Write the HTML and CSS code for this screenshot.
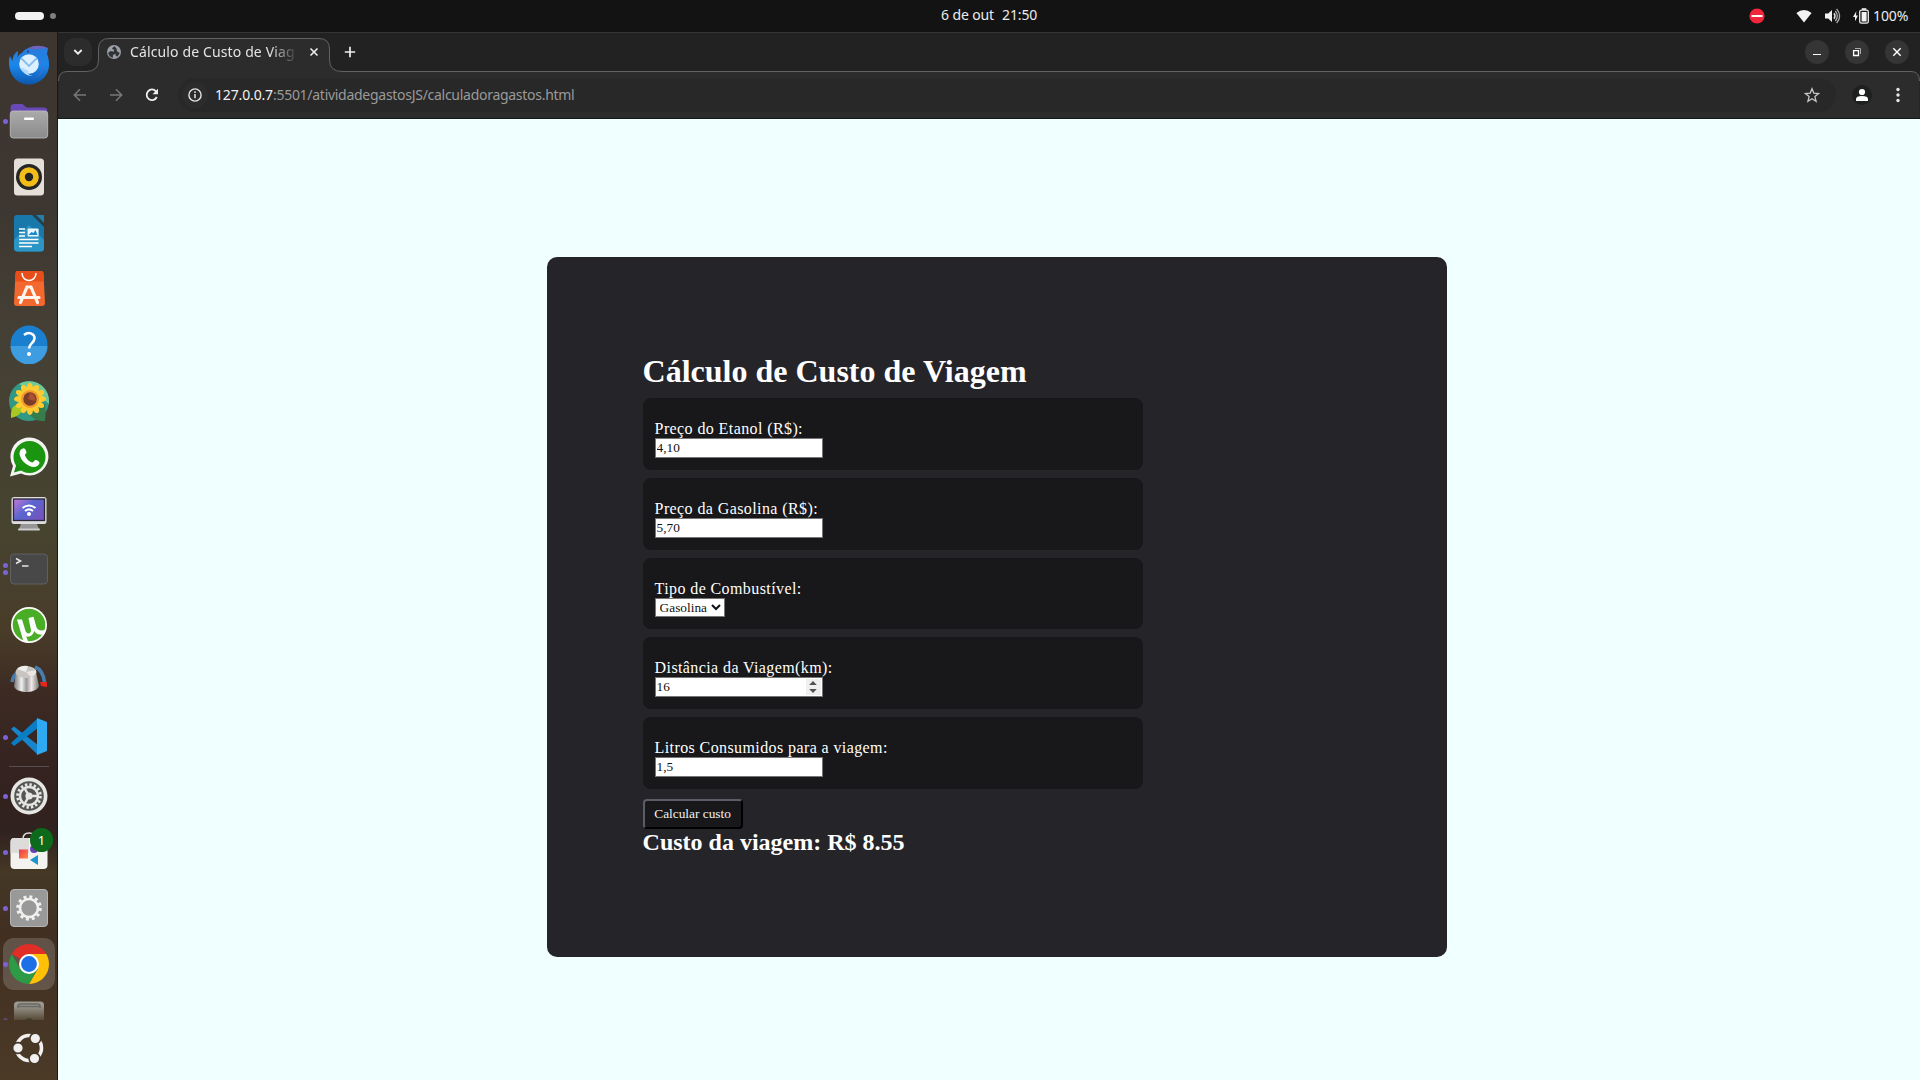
FILE: index.html
```html
<!DOCTYPE html>
<html lang="pt-BR">
<head>
<meta charset="utf-8">
<title>Cálculo de Custo de Viagem</title>
<link rel="stylesheet" href="styles.css">
</head>
<body>
<header class="topbar">
  <div class="workspaces"><span class="pill"></span><span class="dot"></span></div>
  <div class="clock"><span class="date">6 de out</span><span class="time">21:50</span></div>
  <div class="status">
    <svg class="dnd" width="16" height="16" viewBox="0 0 16 16"><circle cx="8" cy="8" r="7.6" fill="#f0263c"/><rect x="2.500" y="7" width="11" height="2" fill="#fff"/></svg>
    <svg class="wifi" width="16" height="16" viewBox="0 0 16 16"><path d="M.4 5Q8-1 15.600 5L8 14.600Z" fill="#f2f2f2"/></svg>
    <svg class="vol" width="16" height="16" viewBox="0 0 16 16"><path d="M0 5.500h3.200L7 2v12L3.200 10.500H0Z" fill="#f2f2f2"/><path d="M9 5.300q2 2.700 0 5.400" fill="none" stroke="#ddd" stroke-width="1.500"/><path d="M10.300 3q4 5 0 10M11.600.8q6 7.200 0 14.400" fill="none" stroke="#aaa" stroke-width="1.300"/></svg>
    <svg class="bat" width="16" height="16" viewBox="0 0 16 16"><path d="M3.300 3.200 0 9h2v4.300L5 7.600H3Z" fill="#eee"/><rect x="6.700" y="2.200" width="8.600" height="13" rx="1.800" fill="none" stroke="#eee" stroke-width="1.300"/><rect x="8.600" y="4" width="5" height="9.500" fill="#f2f2f2"/><rect x="8.800" y=".2" width="4.500" height="1.700" fill="#eee"/></svg>
    <span class="percent">100%</span>
  </div>
</header>
<div class="desktop">
  <nav class="dock">
    <div class="slot"><svg width="40" height="40" viewBox="0 0 40 40"><defs><linearGradient id="tb" x1="0" y1="0" x2="0" y2="1"><stop offset="0" stop-color="#2b79d8"/><stop offset=".5" stop-color="#1b87ea"/><stop offset="1" stop-color="#0d57ad"/></linearGradient></defs><path d="M1 11C-.5 15-.3 20 1 25 3.500 34 11 39.500 20 39.500S40 32 40 20c0-5-.7-8-2-11l1-6C32-.5 18 0 13 8c-2.500 1-3.500 2-4.500 5L9 6C6 8 4 10 3.500 16Z" fill="url(#tb)"/><path d="M19 4C24-.8 33 .2 38.500 3c-6 0-13 2-17.500 1" fill="#7163ba"/><path d="M30 14c7 8 4 19-9 20 8-1 12-6 12-12" fill="#5869d8"/><circle cx="20" cy="19" r="9.800" fill="#dcf0ff"/><path d="m12 13 8 8 8-8" fill="none" stroke="#8bbdeb" stroke-width="1.800"/><path d="M11 22c3 6 6 9 13 9-5-1-6-3-4-5" fill="#b2d9ff"/><circle cx="19" cy="6.500" r="1" fill="#173d7e"/></svg></div>
    <div class="slot run1"><svg width="40" height="40" viewBox="0 0 40 40"><defs><linearGradient id="fg" x1="0" y1="0" x2="0" y2="1"><stop offset="0" stop-color="#aaa"/><stop offset="1" stop-color="#8b8b8b"/></linearGradient></defs><path d="M1.500 7q0-4 4-4h8l4 3.500H35q3.500 0 3.500 3.500v6h-37Z" fill="#694ab4"/><rect x="1.300" y="10" width="37.400" height="27" rx="3" fill="url(#fg)" stroke="#c0c0c0" stroke-width=".8"/><rect x="15" y="16.500" width="10" height="2.500" rx="1" fill="#fff"/></svg></div>
    <div class="slot"><svg width="40" height="40" viewBox="0 0 40 40"><rect x="5" y="1.500" width="30" height="37" rx="3.500" fill="#e4e0d8"/><circle cx="20" cy="20" r="13" fill="#252525"/><circle cx="20" cy="20" r="9.800" fill="#f2bd18"/><circle cx="20" cy="20" r="4.200" fill="#222"/></svg></div>
    <div class="slot"><svg width="40" height="40" viewBox="0 0 40 40"><path d="M8 2h19l8 8v25q0 3.500-3.500 3.500h-23Q5 38.500 5 35V5q0-3 3-3Z" fill="#1978aa"/><path d="M20 12 35 27v8q0 3.500-3.500 3.500h-23Q5 38.500 5 35V27Z" fill="#2b95c5"/><path d="M27 2h8v8Z" fill="#247ea9"/><path d="m23 2 12 12V10l-8-8Z" fill="#273e4b"/><path d="M10 16h6M10 19.500h6M10 23h6M10 26.500h19.500M10 30h19.500M10 33.500h13" stroke="#fff" stroke-width="1.500"/><rect x="18.600" y="15.500" width="11" height="8" rx="1" fill="#eaf7ff"/><path d="m19.500 22 3-3 2 1 2-3 2 5Z" fill="#168acc"/></svg></div>
    <div class="slot"><svg width="40" height="40" viewBox="0 0 40 40"><path d="M8 2h24q2.500 0 2.500 2.500L36 34q0 3-3 3H8q-3 0-3-3L6.500 4.500Q6.500 2 8 2Z" fill="#f3682e"/><path d="M8 2h24q2.500 0 2.500 2.500l.5 8H6.200l.4-8Q6.600 2 8 2Z" fill="#e84e19"/><path d="M13 4c0 10 14 10 14 0" fill="none" stroke="#fff" stroke-width="1.500"/><path d="M11.500 33.500 18 18h4l6.500 15.500M10 28.500h20" fill="none" stroke="#fff5ee" stroke-width="3.200" stroke-linecap="round"/></svg></div>
    <div class="slot up"><svg width="40" height="40" viewBox="0 0 40 40"><circle cx="20" cy="20" r="18.500" fill="#1b7fd0"/><path d="M1.500 22h37a18.500 18.500 0 0 1-37 0Z" fill="#3e9ce0"/><path d="M15 11c5-4 11-1 10.500 3.500-.5 5-5.500 5-5.500 10" fill="none" stroke="#fff" stroke-width="2.500"/><circle cx="20" cy="30" r="2" fill="#fff"/></svg></div>
    <div class="slot"><svg width="40" height="40" viewBox="0 0 40 40"><circle cx="20" cy="20" r="20" fill="#309883"/><path d="M10 3a20 20 0 0 1 30 15v5L27 12Z" fill="#72c998"/><path d="M36 23q1 8 0 17-11 1-16-8Z" fill="#367d4e"/><path d="M2 37q-1-14 9-14 6 10-9 14Z" fill="#a9c922"/><g transform="translate(21 18)"><g id="petals" fill="#ffcb31"><ellipse cy="-11" rx="3" ry="5"/><ellipse cy="11" rx="3" ry="5"/><ellipse cx="-11" rx="5" ry="3"/><ellipse cx="11" rx="5" ry="3"/></g><use href="#petals" transform="rotate(30)"/><use href="#petals" transform="rotate(60)"/><circle r="9" fill="#f09b2c"/><circle r="6.700" fill="#793c28"/><path d="M0-6a6 6 0 0 1 5 8L-2 0Z" fill="#a75230"/></g></svg></div>
    <div class="slot"><svg width="40" height="40" viewBox="0 0 40 40"><path d="M1 39.500 4 29A19 19 0 1 1 12 36.500Z" fill="#f4f4f2"/><circle cx="20.500" cy="20" r="16" fill="#1b9410"/><path d="M5 35.500 7.500 27l6 6Z" fill="#168b0d"/><path d="M14 11.500c2-1 3 2 3.500 4 0 1-2 2-1.500 3 2 4 4 6 7 7 2 0 2-3 4-2.500 2 .7 4 2 3.500 3-1 4-6 5-10 3-6-3-9-7-10-12 0-3 1-5 3.500-5.500Z" fill="#fff"/></svg></div>
    <div class="slot"><svg width="40" height="40" viewBox="0 0 40 40"><defs><linearGradient id="rm" x1="0" y1="0" x2="1" y2=".7"><stop offset="0" stop-color="#c778d7"/><stop offset=".5" stop-color="#5865d0"/><stop offset="1" stop-color="#7554bf"/></linearGradient></defs><path d="M12 31h16l2 5H10Z" fill="#969696"/><rect x="9" y="35.500" width="22" height="2" rx="1" fill="#ccc"/><rect x="2.500" y="4" width="35" height="27" rx="2.500" fill="#ddd"/><rect x="4.500" y="6" width="31" height="21.500" fill="url(#rm)" stroke="#292638" stroke-width="1.300"/><path d="M13.500 15q6.500-5 13 0M16 18q4-3.300 8 0" fill="none" stroke="#fff" stroke-width="2"/><circle cx="20" cy="21" r="2" fill="#fff"/></svg></div>
    <div class="slot run2"><svg width="40" height="40" viewBox="0 0 40 40"><rect x="1.500" y="5" width="37" height="30" rx="3.500" fill="#484848" stroke="#606060"/><path d="m7 9.500 4.500 2.500L7 14.500M13 17h6.500" fill="none" stroke="#e5e5e5" stroke-width="1.600"/></svg></div>
    <div class="slot"><svg width="40" height="40" viewBox="0 0 40 40"><circle cx="20" cy="20" r="18" fill="#fff"/><circle cx="20" cy="20" r="16.300" fill="#49ae26"/><path d="m8 14.500 5 0 3.500 11.500c1.500 4 6 2.500 5.500-1L19.500 13l5-1.200 2.800 10c1.200 4 5 4.200 9.200 3l-1.300 4.300c-4.500 1.300-8 .2-10-3-1.200 4.500-4 6-8 5.400l2.500 6.500-5.200-1.500Z" fill="#fff"/></svg></div>
    <div class="slot up"><svg width="40" height="40" viewBox="0 0 40 40"><defs><linearGradient id="kn"><stop stop-color="#777"/><stop offset=".3" stop-color="#eee"/><stop offset=".5" stop-color="#999"/><stop offset=".7" stop-color="#f3e9e9"/><stop offset="1" stop-color="#777"/></linearGradient></defs><path d="M3 22Q4 16 8 13M26 7q8 3 9.500 15" fill="none" stroke="#467dad" stroke-width="3.500"/><path d="M31 22h7v5l-6-1Z" fill="#e42520"/><path d="m7 12-2 14c1 7.500 22 8.500 25 0L27 12Z" fill="url(#kn)"/><ellipse cx="17" cy="12" rx="10.500" ry="6" fill="#c9c5c0"/><path d="m17 12-9-3q4-4 11-3Z" fill="#eee"/><path d="m17 12 10-2q1 5-5 7Z" fill="#eae6e2"/></svg></div>
    <div class="slot run1 up"><svg width="40" height="40" viewBox="0 0 40 40"><path d="M2 13 5 10.500 29 29v10Z" fill="#1785cc"/><path d="m2 27 3 3 24-18V2Z" fill="#087dc5"/><path d="m28 2 10 4v29l-10 4Z" fill="#2daaf2"/></svg></div>
    <div class="rule"></div>
    <div class="slot run1"><svg width="40" height="40" viewBox="0 0 40 40"><circle cx="20" cy="20" r="18.500" fill="#e6e6e3"/><circle cx="20" cy="20" r="14.800" fill="#555"/><circle cx="20" cy="20" r="11.300" fill="none" stroke="#e6e6e3" stroke-width="3" stroke-dasharray="2.400 2.040"/><circle cx="20" cy="20" r="9" fill="none" stroke="#e6e6e3" stroke-width="2.400"/><circle cx="20" cy="20" r="3.600" fill="#e6e6e3"/><path d="M20 20h8M20 20l-4-7M20 20l-4 7" stroke="#e6e6e3" stroke-width="2.500"/></svg></div>
    <div class="slot run1"><svg width="40" height="40" viewBox="0 0 40 40"><path d="M14 7q0-6 6-6t6 6" fill="none" stroke="#ddd" stroke-width="1.500"/><rect x="1.500" y="6" width="37" height="31" rx="4" fill="#f4f2ef"/><path d="M5 6h15v15H1.500V10Q1.500 6 5 6Z" fill="#dddcdb"/><defs><linearGradient id="sq" x1="0" y1="0" x2="1" y2="1"><stop stop-color="#ed374f"/><stop offset="1" stop-color="#ff8d42"/></linearGradient></defs><rect x="10" y="17.500" width="9" height="9" fill="url(#sq)"/><path d="m29 23v10l-8-5Z" fill="#1b95cb"/><circle cx="25" cy="17" r="4" fill="#6a3eb5"/></svg><span class="badge">1</span></div>
    <div class="slot run1"><svg width="40" height="40" viewBox="0 0 40 40"><rect x="1.500" y="1.500" width="37" height="37" rx="3.500" fill="#999" stroke="#b5b5b5"/><circle cx="20" cy="20" r="11" fill="none" stroke="#f0f0ee" stroke-width="3.500" stroke-dasharray="2.900 2.860"/><circle cx="20" cy="20" r="9" fill="none" stroke="#f0f0ee" stroke-width="2.600"/></svg></div>
    <div class="slot run1 active"><svg width="40" height="40" viewBox="0 0 40 40"><path d="M20 20 2.700 10a20 20 0 0 1 34.600 0Z" fill="#e02d25"/><path d="M20 10h17.300A20 20 0 0 1 20 40l8.700-15Z" fill="#ffc107"/><path d="M2.700 10 11.300 25l8.700 5 8.700-5L20 40A20 20 0 0 1 2.700 10Z" fill="#2d9a46"/><circle cx="20" cy="20" r="10" fill="#fff"/><circle cx="20" cy="20" r="7.900" fill="#1b70e8"/></svg></div>
    <div class="slot trash run1"><svg width="40" height="40" viewBox="0 0 40 40"><defs><linearGradient id="tr" x1="0" y1="0" x2="0" y2="1"><stop offset=".1" stop-color="#9b9992"/><stop offset=".5" stop-color="#574a37"/></linearGradient></defs><rect x="5" y="1.500" width="30" height="37" rx="3.500" fill="url(#tr)"/><path d="M9 8V6q0-2 3-2h16q3 0 3 2v2M10 6.500h20" fill="none" stroke="#686762" stroke-width="1.500"/><path d="M16 20q4-4 8 0Z" fill="#3f4024"/></svg></div>
    <div class="slot"><svg width="40" height="40" viewBox="0 0 40 40"><circle cx="20" cy="20" r="12.500" fill="none" stroke="#f2f0ef" stroke-width="3.600"/><g fill="#f2f0ef" stroke="#46382a" stroke-width="1.600"><circle cx="9" cy="20" r="5.400"/><circle cx="26.300" cy="10.500" r="5.400"/><circle cx="25.500" cy="30.500" r="5.400"/></g></svg></div>
  </nav>
  <section class="browser">
    <svg class="outline" width="1862" height="87" viewBox="0 0 1862 87"><path d="M.5 49Q.5 39.500 9 39.500H28Q40.500 39.500 40.500 28V17Q40.500 6.500 51 6.500H261Q271.500 6.500 271.500 17V28Q271.500 39.500 284 39.500H1853Q1861.500 39.500 1861.500 49V87H.5Z" fill="#2c2c2c"/><path d="M.5 49Q.5 39.500 9 39.500H28Q40.500 39.500 40.500 28V17Q40.500 6.500 51 6.500H261Q271.500 6.500 271.500 17V28Q271.500 39.500 284 39.500H1853Q1861.500 39.500 1861.500 49" fill="none" stroke="#626262"/></svg>
    <div class="tabs">
      <div class="tabsearch"><svg width="10" height="8" viewBox="0 0 10 8"><path d="m1.300 2 3.700 3.700L8.700 2" fill="none" stroke="#eee" stroke-width="1.800"/></svg></div>
      <div class="tab">
        <svg width="14" height="14" viewBox="0 0 14 14"><circle cx="7" cy="7" r="7" fill="#9ba0a6"/><path d="M7.500 1.200C4 3.500 5 4.300 7.200 4.500l-.5 2.300L3.500 6 1.200 7.800c.5 3 2.300 4.700 4.600 5L6 10 8.500 8.800 8.800 11l1.800.5L12.800 8 10 6.300 9.500 3.500Z" fill="#303236"/></svg>
        <span class="tabtitle">Cálculo de Custo de Viag</span>
        <svg width="10" height="10" viewBox="0 0 10 10"><path d="m1.500 1.500 7 7m0-7-7 7" stroke="#eee" stroke-width="1.600"/></svg>
      </div>
      <svg class="plus" width="12" height="12" viewBox="0 0 12 12"><path d="M6 .8v10.400M.8 6h10.400" stroke="#eee" stroke-width="1.700"/></svg>
      <div class="winbtns">
        <span><svg width="24" height="24" viewBox="0 0 24 24"><path d="M8 14.500h8" stroke="#fff"/></svg></span>
        <span><svg width="24" height="24" viewBox="0 0 24 24"><path d="M8.600 10.600h4.900v4.900H8.600Z" fill="none" stroke="#fff" stroke-width="1.300"/><path d="M10 8.500h5.500V14" fill="none" stroke="#aaa"/></svg></span>
        <span><svg width="24" height="24" viewBox="0 0 24 24"><path d="m8.300 8.300 7.400 7.400m0-7.400-7.400 7.400" stroke="#fff" stroke-width="1.400"/></svg></span>
      </div>
    </div>
    <div class="toolbar">
      <svg class="nav" width="14" height="14" viewBox="0 0 14 14"><path d="M13 7H1.500M7 1.300 1.300 7 7 12.700" fill="none" stroke="#777" stroke-width="1.500"/></svg>
      <svg class="nav" width="14" height="14" viewBox="0 0 14 14"><path d="M1 7h11.500M7 1.300 12.700 7 7 12.700" fill="none" stroke="#777" stroke-width="1.500"/></svg>
      <svg class="nav" width="14" height="14" viewBox="0 0 14 14"><path d="M11.800 9A5.300 5.300 0 1 1 11 3.300L12 4.500" fill="none" stroke="#eee" stroke-width="1.800"/><path d="M13 .7v5.500H7.500Z" fill="#eee"/></svg>
      <div class="omnibox">
        <span class="info"><svg width="14" height="14" viewBox="0 0 14 14"><circle cx="7" cy="7" r="6.100" fill="none" stroke="#e5e5e5" stroke-width="1.400"/><path d="M7 6v4.200M7 3.300v1.600" stroke="#e5e5e5" stroke-width="1.500"/></svg></span>
        <span class="url"><b>127.0.0.7</b>:5501/atividadegastosJS/calculadoragastos.html</span>
        <svg class="star" width="16" height="16" viewBox="0 0 16 16"><path d="m8 1.700 1.800 4.400 4.800.4-3.700 3.100 1.200 4.700L8 11.800l-4.100 2.500 1.200-4.700-3.700-3.100 4.800-.4Z" fill="none" stroke="#c6c6c6" stroke-width="1.300"/></svg>
      </div>
      <span class="profile"><svg width="20" height="20" viewBox="0 0 20 20"><circle cx="10" cy="7" r="3.100" fill="#fff"/><path d="M4 16v-2q0-3 6-3t6 3v2Z" fill="#fff"/></svg></span>
      <svg class="more" width="4" height="16" viewBox="0 0 4 16"><g fill="#e8e8e8"><circle cx="2" cy="2.500" r="1.700"/><circle cx="2" cy="8" r="1.700"/><circle cx="2" cy="13.500" r="1.700"/></g></svg>
    </div>
    <main class="page">
      <div class="card">
        <h1>Cálculo de Custo de Viagem</h1>
        <div class="field"><label for="etanol">Preço do Etanol (R$):</label><input id="etanol" type="text" value="4,10"></div>
        <div class="field"><label for="gasolina">Preço da Gasolina (R$):</label><input id="gasolina" type="text" value="5,70"></div>
        <div class="field short"><label for="tipo">Tipo de Combustível:</label><select id="tipo"><option>Gasolina</option><option>Etanol</option></select></div>
        <div class="field"><label for="km">Distância da Viagem(km):</label><div class="number"><input id="km" type="text" value="16"><span class="spin"><svg width="8" height="14" viewBox="0 0 8 14"><path d="M.2 5 4 1l3.800 4ZM.2 9 4 13l3.800-4Z" fill="#505050"/></svg></span></div></div>
        <div class="field"><label for="litros">Litros Consumidos para a viagem:</label><input id="litros" type="text" value="1,5"></div>
        <button type="button">Calcular custo</button>
        <h2>Custo da viagem: R$ 8.55</h2>
      </div>
    </main>
  </section>
</div>
</body>
</html>
```
FILE: styles.css
```css
* { margin: 0; padding: 0; box-sizing: border-box; }
body { width: 1920px; height: 1080px; overflow: hidden; background: #131313; font-family: "Noto Sans", sans-serif; }
svg { display: block; flex: none; }

.topbar { height: 32px; display: grid; grid-template-columns: 941px auto 1fr; align-items: center; color: #ececec; font-size: 14px; }
.workspaces { display: flex; align-items: center; gap: 6px; padding-left: 15px; }
.pill { width: 29px; height: 8px; border-radius: 4px; background: #f2f2f2; }
.dot { width: 6px; height: 6px; border-radius: 50%; background: #808080; }
.clock { display: flex; gap: 8px; line-height: 20px; padding-bottom: 2px; white-space: nowrap; letter-spacing: -.12px; }
.status { display: flex; align-items: center; justify-content: flex-end; padding-right: 11px; height: 32px; }
.wifi { margin-left: 31px; }
.vol { margin-left: 13px; }
.bat { margin-left: 12px; }
.percent { width: 36px; margin-left: 4px; line-height: 20px; white-space: nowrap; letter-spacing: -.1px; }

.desktop { display: flex; height: 1048px; }
.dock { width: 58px; flex: none; padding-top: 5px; border-right: 1px solid #1c1816; background: linear-gradient(#3d3530 0, #3d3731 180px, #454035 300px, #46432f 500px, #493c29 600px, #3c2a23 660px, #33221f 750px, #30221e 800px, #453825 840px, #412f22 900px, #4a3a26 1048px); }
.slot { position: relative; width: 58px; height: 56px; display: flex; align-items: center; justify-content: center; }
.slot > svg { position: relative; }
.up > svg { margin-bottom: 2px; }
.run1::before, .run2::before { content: ""; position: absolute; left: 3px; top: 26px; width: 5px; height: 5px; border-radius: 50%; background: #7c62d8; }
.run2::before { top: 22px; box-shadow: 0 7px #7c62d8; }
.rule { height: 1px; width: 40px; margin: 1px 0 1px 9px; background: #555050; }
.active::after { content: ""; position: absolute; left: 3px; top: 2px; width: 52px; height: 52px; border-radius: 11px; background: rgba(255, 255, 255, .17); }
.active > svg { z-index: 1; }
.active::before { z-index: 1; }
.badge { position: absolute; left: 30px; top: 4px; width: 23px; height: 24px; border-radius: 12px; background: #0c6a1a; color: #fff; font-size: 13px; line-height: 24px; text-align: center; }
.trash { height: 28px; overflow: hidden; align-items: flex-start; }
.trash > svg { margin-top: 8px; }
.trash::before { opacity: .45; }

.browser { position: relative; width: 1862px; display: flex; flex-direction: column; background: #222; border-top: 1px solid #343434; }
.outline { position: absolute; left: 0; top: -1px; }
.tabs { position: relative; height: 39px; display: flex; align-items: center; padding: 0 11px 1px 6px; }
.tabsearch { width: 28px; height: 28px; border-radius: 10px; background: #2c2c2c; display: flex; align-items: center; justify-content: center; }
.tab { width: 231px; margin-left: 7px; padding: 0 11px 0 8px; display: flex; align-items: center; }
.tabtitle { width: 170px; margin: 0 12px 0 9px; font-size: 14px; line-height: 20px; letter-spacing: .13px; padding-bottom: 1px; color: #e4e4e4; overflow: hidden; white-space: nowrap; -webkit-mask-image: linear-gradient(90deg, #000 140px, transparent 168px); mask-image: linear-gradient(90deg, #000 140px, transparent 168px); }
.plus { margin-left: 14px; }
.winbtns { margin-left: auto; display: flex; gap: 16px; }
.winbtns span { width: 24px; height: 24px; border-radius: 50%; background: #353535; }
.toolbar { position: relative; height: 47px; display: flex; align-items: center; padding: 0 20px 0 15px; border-bottom: 1px solid #171717; }
.nav { margin-right: 22px; }
.omnibox { width: 1658px; height: 34px; margin-left: -3px; border-radius: 17px; background: #282828; display: flex; align-items: center; padding: 0 16px 0 4px; }
.info { width: 26px; height: 26px; border-radius: 50%; background: #2c2c2c; display: flex; align-items: center; justify-content: center; }
.url { margin-left: 7px; font-size: 14px; line-height: 20px; letter-spacing: -.28px; color: #9a9a9a; white-space: nowrap; }
.url b { font-weight: 400; color: #f0f0f0; letter-spacing: -.15px; }
.star { margin-left: auto; }
.profile { width: 20px; height: 20px; border-radius: 50%; background: #1d201f; margin-left: 16px; }
.more { margin-left: auto; }

.page { flex: 1; display: flex; align-items: center; justify-content: center; background: #f0ffff; }
.card { width: 900px; height: 700px; margin: 15px 0 0 16px; padding: 96px 96px 96px 95.6px; border-radius: 10px; background: #252429; color: #fff; font-family: "Liberation Serif", serif; }
h1 { font-size: 32px; line-height: 37px; margin-bottom: 8px; }
.field { width: 500px; height: 72px; padding: 22px 12px 12px; margin-bottom: 8px; border-radius: 8px; background: #18181a; display: flex; flex-direction: column; align-items: flex-start; }
.short { height: 71px; }
label { font-size: 16px; line-height: 18px; letter-spacing: .4px; }
input, select, button { font-family: "Liberation Serif", serif; font-size: 13.333px; }
input { width: 168px; height: 20px; padding: 0 1px; border: 1px solid #767676; background: #fff; color: #111; }
select { width: 70px; height: 19px; color: #111; background-color: #fff; border: 1px solid #767676; border-radius: 0; }
.number { position: relative; }
.spin { position: absolute; right: 2px; top: 2px; width: 15px; height: 16px; background: #efefef; display: flex; align-items: center; justify-content: center; }
button { display: block; width: 100px; height: 30px; margin-top: 10px; border: 2px solid; border-color: #5d5b66 #000 #000 #5d5b66; border-radius: 4px; background: #18181a; color: #f1f1f1; }
h2 { font-size: 24px; line-height: 27px; }
```
